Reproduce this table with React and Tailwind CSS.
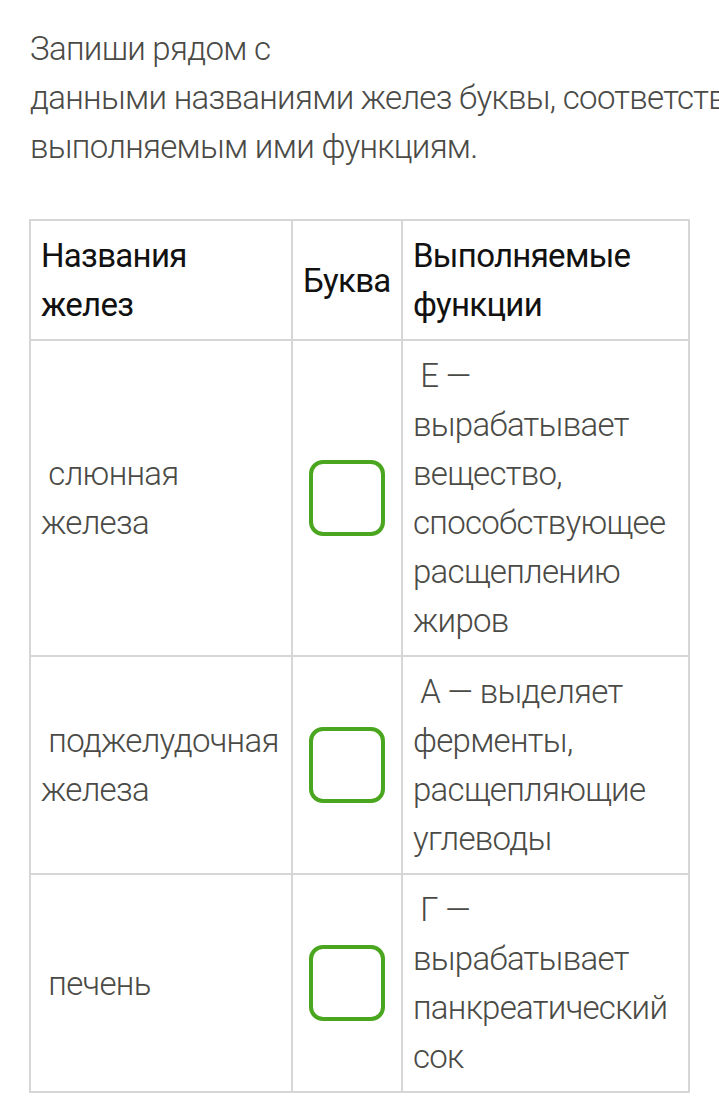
const rows = [
  {
    name: ['\u00a0слюнная', 'железа'],
    fn: '\u00a0Е — вырабатывает вещество, способствующее расщеплению жиров',
  },
  {
    name: ['\u00a0поджелудочная', 'железа'],
    fn: '\u00a0А — выделяет ферменты, расщепляющие углеводы',
  },
  {
    name: ['\u00a0печень'],
    fn: '\u00a0Г — вырабатывает панкреатический сок',
  },
];

function LetterBox() {
  return (
    <div className="mx-auto h-[76px] w-[76px] rounded-[14px] border-[4px] border-[#4ba61f]" />
  );
}

export default function App() {
  return (
    <div
      className="h-[1112px] w-[719px] overflow-hidden bg-white tracking-[-0.7px]"
      style={{ fontFamily: '"Roboto Light", Roboto, "Noto Sans", sans-serif' }}
    >
      <p className="whitespace-nowrap pl-[30px] pt-[24px] text-[33px] font-light leading-[49px] text-[#4a4a46]">
        Запиши рядом с
        <br />
        данными названиями желез буквы, соответствующие
        <br />
        выполняемым ими функциям.
      </p>

      <table className="ml-[29px] mt-[48px] w-[659px] table-fixed border-collapse text-[33px] leading-[49px]">
        <colgroup>
          <col className="w-[262px]" />
          <col className="w-[110px]" />
          <col className="w-[287px]" />
        </colgroup>
        <thead>
          <tr className="text-[#111]" style={{ fontFamily: 'Roboto, "Noto Sans", sans-serif' }}>
            <th className="border-2 border-[#d6d6d6] px-[10px] py-[10px] text-left align-middle font-normal">
              Названия желез
            </th>
            <th className="border-2 border-[#d6d6d6] px-[10px] py-[10px] text-left align-middle font-normal">
              Буква
            </th>
            <th className="border-2 border-[#d6d6d6] px-[10px] py-[10px] text-left align-middle font-normal">
              Выполняемые функции
            </th>
          </tr>
        </thead>
        <tbody>
          {rows.map((row, idx) => (
            <tr key={idx} className="font-light text-[#4a4a46]">
              <td className="border-2 border-[#d6d6d6] px-[10px] py-[10px] align-middle">
                {row.name.map((line, i) => (
                  <div key={i}>{line}</div>
                ))}
              </td>
              <td className="border-2 border-[#d6d6d6] px-[10px] py-[10px] align-middle">
                <LetterBox />
              </td>
              <td className="border-2 border-[#d6d6d6] px-[10px] py-[10px] align-middle">
                {row.fn}
              </td>
            </tr>
          ))}
        </tbody>
      </table>
    </div>
  );
}
